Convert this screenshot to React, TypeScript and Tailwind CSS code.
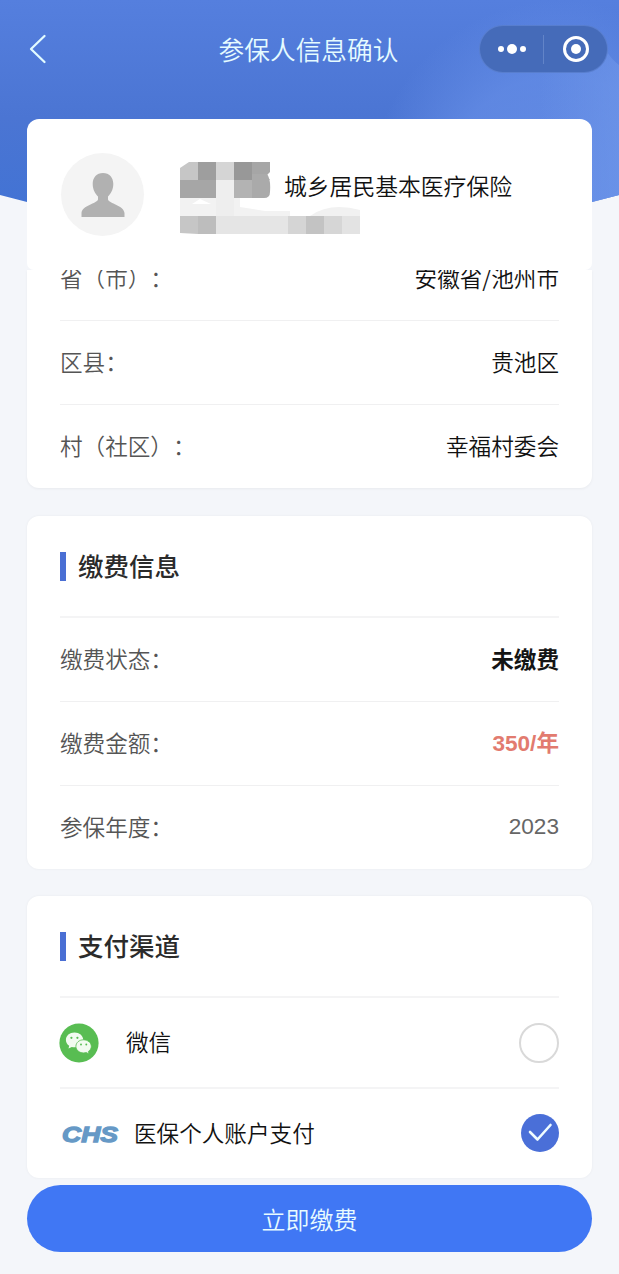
import type { ReactNode } from 'react'
import clsx from 'clsx'

const regionRows = [
  { label: '省（市）：', value: '安徽省/池州市' },
  { label: '区县：', value: '贵池区' },
  { label: '村（社区）：', value: '幸福村委会' },
]

const feeRows = [
  { label: '缴费状态：', value: '未缴费', className: 'pb-[2px] font-bold text-[#151515]' },
  { label: '缴费金额：', value: '350/年', className: "pt-px font-['Liberation_Sans','Noto_Sans_CJK_SC',sans-serif] font-bold text-[#e27b6f]" },
  { label: '参保年度：', value: '2023', className: "pb-[2px] font-['Liberation_Sans',sans-serif] text-[#666]" },
]

function HeaderBackground() {
  return (
    <svg className="absolute left-0 top-0" width="619" height="260" viewBox="0 0 619 260" aria-hidden="true">
      <defs>
        <linearGradient id="sky" x1="0" y1="0" x2="0" y2="1">
          <stop offset="0" stopColor="#557fde" />
          <stop offset="0.45" stopColor="#4b75d3" />
          <stop offset="0.8" stopColor="#4273d4" />
        </linearGradient>
        <radialGradient id="glow">
          <stop offset="0" stopColor="#6a92ea" stopOpacity="0.8" />
          <stop offset="0.6" stopColor="#6a92ea" stopOpacity="0.6" />
          <stop offset="1" stopColor="#6a92ea" stopOpacity="0" />
        </radialGradient>
        <linearGradient id="edge" x1="0" y1="0" x2="1" y2="0">
          <stop offset="0" stopColor="#7299eb" stopOpacity="0" />
          <stop offset="1" stopColor="#7299eb" stopOpacity="0.55" />
        </linearGradient>
        <clipPath id="curve">
          <path d="M0 0H619V195L592 202Q310 276 27 202L0 195Z" />
        </clipPath>
      </defs>
      <g clipPath="url(#curve)">
        <rect width="619" height="260" fill="url(#sky)" />
        <circle cx="560" cy="190" r="190" fill="url(#glow)" />
        <path d="M600 32Q604 54 619 65V260H540V32Z" fill="url(#edge)" />
      </g>
    </svg>
  )
}

function NavBar() {
  return (
    <header className="relative flex h-[119px] shrink-0 items-start justify-center pt-[32px]">
      <svg className="absolute left-[28px] top-[33px]" width="20" height="32" viewBox="0 0 20 32" fill="none" stroke="#e2fbff" strokeWidth="2.3" strokeLinecap="round" strokeLinejoin="round">
        <path d="M16.5 3L3 16L16.5 29" />
      </svg>
      <h1 className="mr-[2px] text-[25.7px] leading-[34px] font-[350] text-[#e5fbff]">参保人信息确认</h1>
      {/* Mini program capsule */}
      <div className="absolute left-[479px] top-[25px] flex h-[48px] w-[129px] items-center rounded-full border border-[#658bdc]/60 bg-[#456bb9]">
        <div className="flex flex-1 items-center justify-center gap-[3px]">
          <i className="size-[6px] rounded-full bg-white" />
          <i className="size-[10px] rounded-full bg-white" />
          <i className="size-[6px] rounded-full bg-white" />
        </div>
        <div className="h-[29px] w-px bg-[#6284c8]" />
        <div className="flex flex-1 items-center justify-center">
          <div className="flex size-[26px] items-center justify-center rounded-full border-[3px] border-white">
            <i className="size-[10px] rounded-full bg-white" />
          </div>
        </div>
      </div>
    </header>
  )
}

// Blocks that hide the name and the ID number
function RedactedText() {
  return (
    <svg width="206" height="78" viewBox="0 0 206 78" aria-hidden="true">
      <path d="M0 36H36V55H0ZM36 36H60V45L85 49H110V55H36Z" fill="#f2f2f2" />
      <path d="M9 0H36V18H9Z" fill="#9e9e9e" />
      <path d="M9 0H18V18H0V6Z" fill="#c6c6c6" />
      <path d="M0 18H36V36H0Z" fill="#a6a6a6" />
      <path d="M36 0H54V18H36Z" fill="#d5d5d5" />
      <path d="M36 18H54V54H36Z" fill="#eee" />
      <path d="M54 0H72V18H54Z" fill="#989898" />
      <path d="M72 0H90V10L86 14L90 18H72Z" fill="#a6a6a6" />
      <path d="M54 18H72V36H54Z" fill="#b3b3b3" />
      <path d="M72 12H87Q91 17 90 30Q90 36 84 36H72Z" fill="#aaa" />
      <path d="M12 42L20 37L31 42Z" fill="#fff" />
      <path d="M0 54H18V72L0 71Z" fill="#c6c6c6" />
      <path d="M18 54H36V72H18Z" fill="#bdbdbd" />
      <path d="M36 54H108V72H36Z" fill="#e5e5e5" />
      <path d="M108 54H126V72H108Z" fill="#d5d5d5" />
      <path d="M126 54H144V72H126Z" fill="#c3c3c3" />
      <path d="M144 54H162V72H144Z" fill="#d6d6d6" />
      <path d="M130 54Q150 40 180 48V54Z" fill="#f1f1f1" />
      <path d="M162 54H180V72H162Z" fill="#e3e3e3" />
    </svg>
  )
}

function ProfileCard() {
  return (
    <section className="relative flex h-[151px] items-start rounded-t-[12px] rounded-b-[7px] bg-white pl-[34px] pt-[34px]">
      <div className="flex size-[83px] shrink-0 items-center justify-center rounded-full bg-[#f4f4f4]">
        <svg width="44" height="46" viewBox="0 0 44 46" fill="#b1b1b1">
          <path d="M22 1C28.3 1 32.3 5.6 32.3 12C32.3 18 29.5 21.8 27 24.5V27.5C28 31.5 43 33.5 43.5 41V45H0.5V41C1 33.5 16 31.5 17 27.5V24.5C14.5 21.8 11.7 18 11.7 12C11.7 5.6 15.7 1 22 1Z" />
        </svg>
      </div>
      <div className="ml-[36px] mt-[9px] w-[104px]">
        <RedactedText />
      </div>
      <p className="relative mt-[16px] text-[22.8px] leading-[34px] font-[350] whitespace-nowrap text-[#111]">城乡居民基本医疗保险</p>
    </section>
  )
}

function InfoRow({ label, value, className = 'pb-[2px] font-[350] text-[#111]' }: { label: string; value: string; className?: string }) {
  return (
    <div className="flex h-[84px] items-center justify-between text-[22.6px]">
      <span className="pb-[2px] font-[350] text-[#555] [text-spacing-trim:space-all]">{label}</span>
      <span className={className}>{value}</span>
    </div>
  )
}

function Card({ title, children, className }: { title: string; children: ReactNode; className?: string }) {
  return (
    <section className={clsx('rounded-[12px] bg-white px-[33px] shadow-[0_0_3px_rgba(0,0,0,0.05)]', className)}>
      <div className="flex h-[102px] items-center border-b-2 border-[#f4f4f5]">
        <i className="h-[29px] w-[6px] bg-[#4a6fd4]" />
        <h2 className="ml-[12px] pb-px text-[25.5px] font-medium text-[#2b2b2b]">{title}</h2>
      </div>
      {children}
    </section>
  )
}

function WechatIcon() {
  return (
    <svg className="-ml-px" width="40" height="40" viewBox="0 0 40 40">
      <circle cx="20" cy="20" r="19.6" fill="#58bd52" />
      <path d="M15.5 9.5C10.7 9.5 6.9 12.7 6.9 16.9C6.9 19.3 8.2 21.3 10.2 22.7L9.5 25.5L12.8 23.9C13.7 24.1 14.6 24.2 15.5 24.2C20.3 24.2 24.2 21 24.2 16.9C24.2 12.7 20.3 9.5 15.5 9.5Z" fill="#f2fbf0" />
      <path d="M24.5 16.8C20.2 16.8 16.9 19.7 16.9 23.3C16.9 27 20.2 29.9 24.5 29.9C25.5 29.9 26.4 29.7 27.3 29.5L30 31L29.4 28.4C31.3 27.2 32.3 25.4 32.3 23.3C32.3 19.7 28.7 16.8 24.5 16.8Z" fill="#f2fbf0" stroke="#58bd52" strokeWidth="0.8" />
      <g fill="#58bd52">
        <circle cx="12.4" cy="14.8" r="1.1" />
        <circle cx="18.4" cy="14.8" r="1.1" />
        <circle cx="22" cy="21.5" r="0.95" />
        <circle cx="27.3" cy="21.5" r="0.95" />
      </g>
    </svg>
  )
}

function ChsLogo() {
  return (
    <svg className="overflow-visible" width="60" height="26" viewBox="0 0 60 26">
      <text x="2" y="21.5" textLength="56" lengthAdjust="spacingAndGlyphs" fontFamily="Liberation Sans, sans-serif" fontSize="22" fontWeight="700" fontStyle="italic" fill="#6699c6" stroke="#6699c6" strokeWidth="1.3">
        CHS
      </text>
    </svg>
  )
}

export default function App() {
  return (
    <div className="relative flex h-[1274px] w-[619px] flex-col overflow-hidden bg-[#f4f6fa] font-['Noto_Sans_CJK_SC',sans-serif]">
      <HeaderBackground />
      <NavBar />
      <main className="relative px-[27px]">
        <ProfileCard />

        {/* Region list, scrolled under the profile card */}
        <section className="h-[218px] overflow-hidden rounded-b-[12px] bg-white px-[33px] shadow-[0_1px_3px_rgba(0,0,0,0.05)]">
          <div className="-mt-[33px] divide-y divide-[#f0f0f1]">
            {regionRows.map((row) => (
              <InfoRow key={row.label} {...row} />
            ))}
          </div>
        </section>

        <Card title="缴费信息" className="mt-[28px] h-[353px]">
          <div className="divide-y divide-[#f0f0f1]">
            {feeRows.map((row) => (
              <InfoRow key={row.label} {...row} />
            ))}
          </div>
        </Card>

        <Card title="支付渠道" className="mt-[27px] h-[282px]">
          <div className="flex h-[91px] items-center border-b-2 border-[#f4f4f5] text-[22.6px] font-[350] text-[#111]">
            <WechatIcon />
            <span className="ml-[27px] pb-[2px]">微信</span>
            <i className="ml-auto size-[40px] rounded-full border-2 border-[#d9d9d9]" />
          </div>
          <div className="flex h-[89px] items-center pb-[2px] text-[22.6px] font-[350] text-[#111]">
            <ChsLogo />
            <span className="ml-[14px]">医保个人账户支付</span>
            <span className="ml-auto flex size-[38px] items-center justify-center rounded-full bg-[#4a6fd8]">
              <svg width="26" height="22" viewBox="0 0 26 22" fill="none" stroke="#effcff" strokeWidth="2.6" strokeLinecap="round" strokeLinejoin="round">
                <path d="M3 10L10.5 17.5L23.5 3" />
              </svg>
            </span>
          </div>
        </Card>

        <button className="mt-[7px] flex h-[67px] w-full items-center justify-center rounded-full bg-[#4077f4] text-[24px] font-[350] text-[#e8fbff]">
          立即缴费
        </button>
      </main>
    </div>
  )
}
